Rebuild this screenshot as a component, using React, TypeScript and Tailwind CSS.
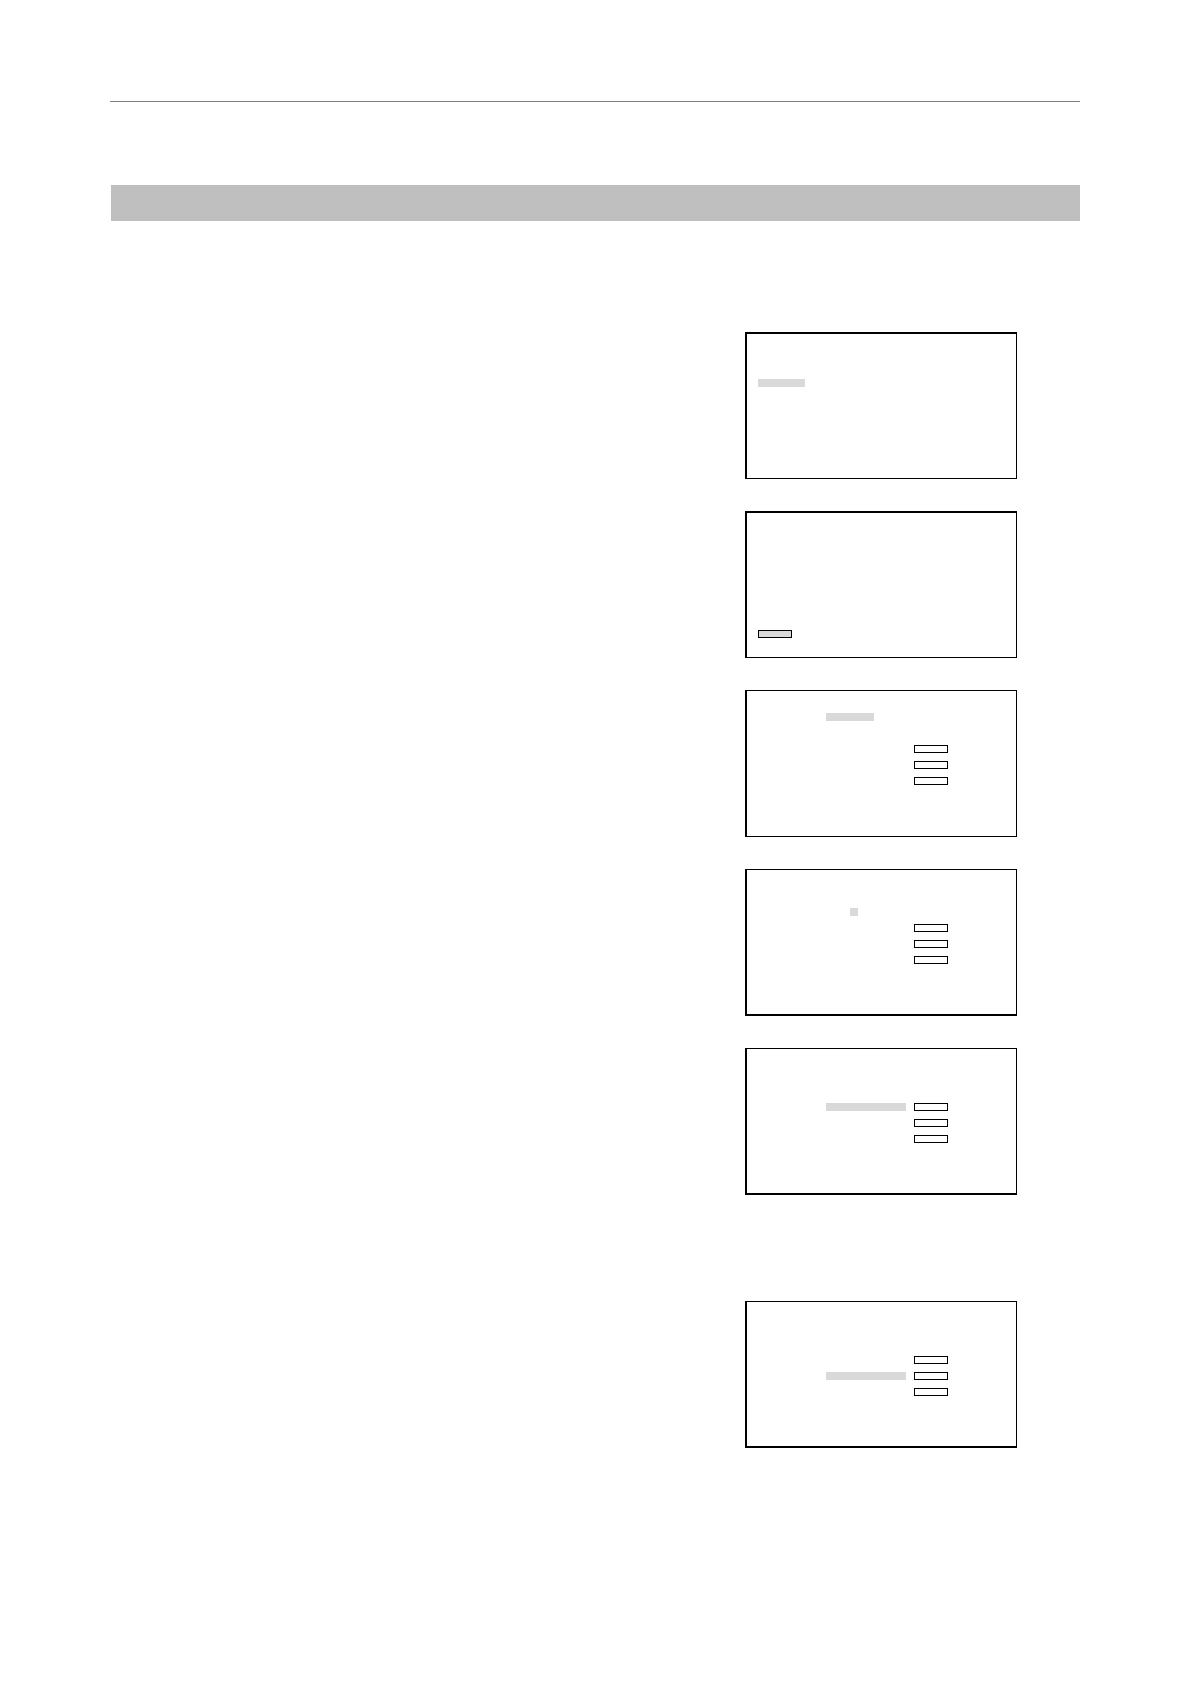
import clsx from "clsx";

type Row = {
  mark?: "short" | "cell" | "long";
  keyBox?: boolean;
};

type Screen = {
  id: string;
  frame: string;
  rows: Row[];
};

const markStyles = {
  short: "w-12",
  cell: "ml-6 w-2",
  long: "w-20",
};

const screens: Screen[] = [
  {
    id: "select",
    frame: "border-t border-b pt-[22px]",
    rows: [{ mark: "short" }, {}, { keyBox: true }, { keyBox: true }, { keyBox: true }],
  },
  {
    id: "number",
    frame: "border-t border-b-2 pt-[22px]",
    rows: [{}, { mark: "cell" }, { keyBox: true }, { keyBox: true }, { keyBox: true }],
  },
  {
    id: "first",
    frame: "border-t border-b-2 pt-[22px]",
    rows: [{}, {}, { mark: "long", keyBox: true }, { keyBox: true }, { keyBox: true }],
  },
];

const lastScreen: Screen = {
  id: "second",
  frame: "border-t border-b-2 pt-[22px]",
  rows: [{}, {}, { keyBox: true }, { mark: "long", keyBox: true }, { keyBox: true }],
};

const frameBase = "h-[147px] w-[272px] border-l-2 border-r border-black pl-[11px]";

function ScreenPanel({ screen }: { screen: Screen }) {
  return (
    <div className={clsx(frameBase, "flex flex-col gap-2", screen.frame)}>
      {screen.rows.map((row, index) => (
        <div className="flex h-2 pl-[68px]" key={index}>
          <div className="w-[88px]">
            {row.mark ? <div className={clsx("h-2 bg-[#d9d9d9]", markStyles[row.mark])} /> : null}
          </div>
          {row.keyBox ? <div className="w-[34px] border border-black" /> : null}
        </div>
      ))}
    </div>
  );
}

export default function App() {
  return (
    <div className="min-h-screen bg-white px-[110px] pt-[101px]">
      <header>
        <hr className="border-t border-[#7f7f7f]" />
        <div className="mt-[83px] ml-px h-9 bg-[#bfbfbf]" />
      </header>
      <main className="mt-[111px] flex flex-col items-end gap-8 pr-[63px]">
        <div className={clsx(frameBase, "border-t-2 border-b pt-[45px]")}>
          <div className="h-2 w-[47px] bg-[#d9d9d9]" />
        </div>
        <div className={clsx(frameBase, "border-t-2 border-b pt-[117px]")}>
          <div className="h-2 w-[34px] border border-black bg-[#d9d9d9]" />
        </div>
        {screens.map((screen) => (
          <ScreenPanel key={screen.id} screen={screen} />
        ))}
        <section className="pt-[74px]">
          <ScreenPanel screen={lastScreen} />
        </section>
      </main>
    </div>
  );
}
